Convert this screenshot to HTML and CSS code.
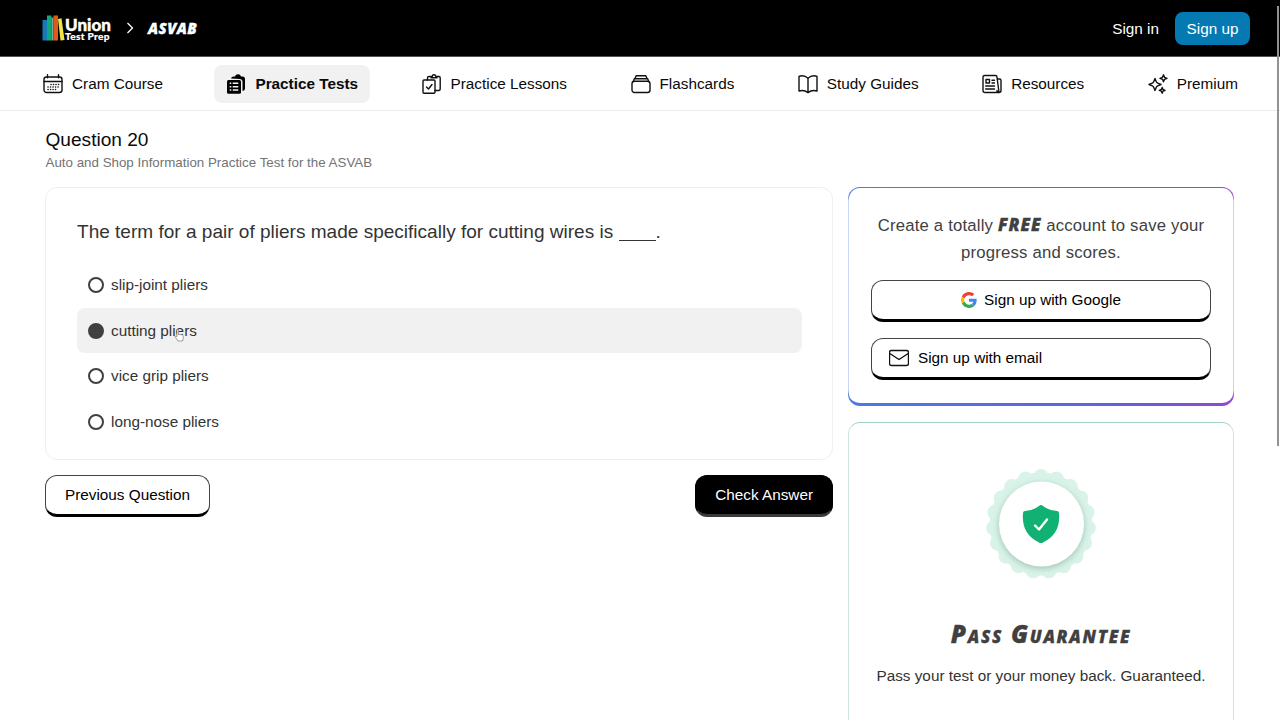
FILE: index.html
```html
<!DOCTYPE html>
<html lang="en">
<head>
    <meta charset="UTF-8">
    <meta name="viewport" content="width=device-width, initial-scale=1.0">
    <title>Question 20 - ASVAB Practice Test</title>
    <link rel="stylesheet" href="styles.css">
</head>
<body>

<header class="top-bar">
    <a class="logo">
        <svg class="logo-books" width="24" height="28" viewBox="0 0 24 28">
            <path fill="#1679b5" d="M0.5 6h5v20.500h-5z"/>
            <path fill="#13a878" d="M5 1.500h4.500v25H5z"/>
            <path fill="#76a9a0" d="M9.500 3.500h2v23h-2z"/>
            <path fill="#dd5b16" d="M11.500 1.500h4.500v25h-4.500z"/>
            <path fill="#f0e342" d="M16 5l3.500-.8 3 21.800-4 .5z"/>
        </svg>
        <span class="logo-text"><b>Union</b><small>Test Prep</small></span>
    </a>
    <svg class="chevron" width="8" height="12" viewBox="0 0 8 12"><path d="M1.500 1l5 5-5 5"/></svg>
    <span class="marker exam">ASVAB</span>
    <div class="account">
        <a class="sign-in">Sign in</a>
        <a class="sign-up">Sign up</a>
    </div>
</header>

<nav class="main-nav">
    <a class="nav-item">
        <svg class="icon" viewBox="0 0 20 20">
            <rect x="1" y="3" width="18" height="15.500" rx="2.500"/>
            <path d="M1 7.500h18M4.500 .8v3M15.500 .8v3"/>
            <path class="dots" d="M8 10.500h8M5 13h10.500M5 15.500h8"/>
        </svg>
        <span>Cram Course</span>
    </a>
    <a class="nav-item active">
        <svg class="icon" viewBox="0 0 20 20">
            <path class="solid" d="M5 4.500Q5.500 2.500 7.500 2.500H9Q9.500 .3 12 .3t3 2.200h1.500q2.500 0 2.500 2.500v9.500q0 2-2.500 2.500V8q0-3-3-3z"/>
            <rect class="solid" x="1" y="6" width="14" height="13.700" rx="1.500"/>
            <path class="knock" d="M3.700 9.300h1.600M6.700 9.300h5.600M3.700 12.700h1.600M6.700 12.700h5.600M3.700 16h1.600M6.700 16h5.600"/>
        </svg>
        <span>Practice Tests</span>
    </a>
    <a class="nav-item">
        <svg class="icon" viewBox="0 0 20 20">
            <rect x="1" y="6" width="12" height="13.200" rx="1"/>
            <path d="M5.500 6V4q0-1.500 1.500-1.500h2M14.500 2.500H17q1.200 0 1.200 1.500v11q0 1.500-1.500 1.500H13M9 3.800V2.500h1.200q.2-1.700 1.800-1.700t1.800 1.700H15v1.300zM4.500 13l2 2 3.500-4.500"/>
        </svg>
        <span>Practice Lessons</span>
    </a>
    <a class="nav-item">
        <svg class="icon" viewBox="0 0 20 20">
            <rect x="1" y="7.200" width="18" height="11.300" rx="2.500"/>
            <path d="M2.300 7.500l1-2.800h13.400l1 2.800M4 4.500l1.200-2.700h9.600L16 4.500"/>
        </svg>
        <span>Flashcards</span>
    </a>
    <a class="nav-item">
        <svg class="icon" viewBox="0 0 20 20">
            <path d="M10 4.200Q7.500 1.700 4 1.700q-1.600 0-3 .6v14.700q5-1.600 9 1.600 4-3.200 9-1.600V2.300q-1.400-.6-3-.6-3.500 0-6 2.500zM10 4.200v14.400"/>
        </svg>
        <span>Study Guides</span>
    </a>
    <a class="nav-item">
        <svg class="icon" viewBox="0 0 20 20">
            <path d="M17 18.500H3q-2 0-2-2V3Q1 1.500 2.500 1.500h11Q15 1.500 15 3zM15 5h2.500Q19 5 19 6.500v10q0 2-2 2t-2-2M10 6.200h2.500M10 9h2.500M3.700 12h8.800M3.700 15h8.800"/>
            <rect x="4" y="5.500" width="3.500" height="3.500"/>
        </svg>
        <span>Resources</span>
    </a>
    <a class="nav-item">
        <svg class="icon" viewBox="0 0 20 20">
            <path d="M7 4.500l1.300 3.200q.4 1 1.400 1.400L13 10.500l-3.300 1.300q-1 .4-1.400 1.400L7 16.500l-1.300-3.300q-.4-1-1.400-1.400L1 10.500l3.300-1.400q1-.4 1.400-1.400zM15.500 .8l1 2.500 2.500 1-2.500 1-1 2.500-1-2.500-2.500-1 2.500-1zM14.200 13.500l.8 2 2 .9-2 .8-.8 2-.9-2-2-.8 2-.9z"/>
        </svg>
        <span>Premium</span>
    </a>
</nav>

<div class="page">
    <h1 class="question-title">Question 20</h1>
    <p class="test-name">Auto and Shop Information Practice Test for the ASVAB</p>

    <div class="columns">
        <main class="quiz">
            <section class="question-card">
                <h2 class="question">The term for a pair of pliers made specifically for cutting wires is <span class="blank"></span>.</h2>
                <ul class="answers">
                    <li class="answer"><i class="radio"></i>slip-joint pliers</li>
                    <li class="answer selected"><i class="radio"></i>cutting pliers
                        <svg class="cursor" width="10" height="13" viewBox="0 0 10 13"><path d="M3 7.500V1.500q0-1 .8-1t.8 1v4q2.500-.2 4 .6.8.4.8 1.400-.2 2-.8 4.500H4Q2.500 9.500 1 7.800q0-1.200 2-.3z"/></svg>
                    </li>
                    <li class="answer"><i class="radio"></i>vice grip pliers</li>
                    <li class="answer"><i class="radio"></i>long-nose pliers</li>
                </ul>
            </section>
            <div class="actions">
                <button class="btn">Previous Question</button>
                <button class="btn btn-dark">Check Answer</button>
            </div>
        </main>

        <aside class="sidebar">
            <section class="signup-card">
                <p class="signup-text">Create a totally <span class="marker free">FREE</span> account to save your progress and scores.</p>
                <button class="btn btn-google">
                    <svg width="16" height="16" viewBox="0 0 48 48">
                        <path fill="#ea4335" d="M24 9.500c3.540 0 6.710 1.220 9.210 3.600l6.850-6.850C35.900 2.380 30.470 0 24 0 14.620 0 6.510 5.380 2.560 13.220l7.980 6.190C12.430 13.720 17.740 9.500 24 9.500z"/>
                        <path fill="#4285f4" d="M46.980 24.550c0-1.570-.15-3.090-.38-4.550H24v9.020h12.940c-.58 2.960-2.260 5.480-4.780 7.180l7.730 6c4.510-4.180 7.090-10.360 7.090-17.650z"/>
                        <path fill="#fbbc05" d="M10.530 28.590A14.500 14.500 0 0 1 9.770 24c0-1.600.27-3.140.76-4.590l-7.980-6.190A23.900 23.900 0 0 0 0 24c0 3.880.92 7.540 2.560 10.780z"/>
                        <path fill="#34a853" d="M24 48c6.480 0 11.930-2.130 15.890-5.810l-7.730-6c-2.150 1.450-4.920 2.300-8.160 2.300-6.260 0-11.570-4.220-13.470-9.910l-7.980 6.190C6.510 42.620 14.620 48 24 48z"/>
                    </svg>
                    Sign up with Google
                </button>
                <button class="btn btn-email">
                    <svg class="icon" viewBox="0 0 20 20"><rect x=".5" y="2.500" width="19" height="15" rx="2"/><path d="M.8 5.500l9.200 6 9.200-6"/></svg>
                    Sign up with email
                </button>
            </section>

            <section class="guarantee-card">
                <svg class="badge" width="120" height="120" viewBox="0 0 120 120">
                    <circle class="seal" cx="60" cy="60" r="51.500"/>
                    <circle class="scallops" cx="60" cy="60" r="47.500" pathLength="19" transform="rotate(-90 60 60)"/>
                    <circle class="disc" cx="60.500" cy="60" r="42.500"/>
                    <path class="shield" d="M60 41q1 0 2 1 5.500 4.500 14 5 1.800 0 2 2 2 21-16 29.500-2 1-4 0Q40 70 42 49q.2-2 2-2 8.500-.5 14-5 1-1 2-1z"/>
                    <path class="check" d="M54 61.500l4 4 8-10"/>
                </svg>
                <h3 class="marker guarantee-title">Pass Guarantee</h3>
                <p class="guarantee-text">Pass your test or your money back. Guaranteed.</p>
            </section>
        </aside>
    </div>
</div>

<div class="scroll-thumb"></div>

</body>
</html>
```
FILE: styles.css
```css
* {
    box-sizing: border-box;
}

body {
    margin: 0;
    height: 720px;
    overflow: hidden;
    background: #fff;
    color: #0a0a0a;
    font-family: "Liberation Sans", Arial, sans-serif;
    font-size: 15.3px;
}

.marker {
    font-family: "Permanent Marker", "Open Sans", sans-serif;
    font-weight: 800;
    font-style: italic;
    -webkit-text-stroke: 0.3px currentColor;
}

/* Top bar */
.top-bar {
    display: flex;
    align-items: center;
    height: 57px;
    padding: 0 30px 0 42px;
    background: #000;
    border-bottom: 1px solid #55535a;
    color: #fff;
}

.logo {
    display: flex;
    align-items: center;
    width: 69px;
}

.logo-books {
    flex: none;
    margin-right: -1px;
}

.logo-text {
    font-family: Lato, sans-serif;
    font-weight: 900;
    padding-top: 3px;
}

.logo-text b {
    display: block;
    font-weight: 900;
    font-size: 17px;
    line-height: 13px;
    -webkit-text-stroke: 0.4px #fff;
}

.logo-text small {
    display: block;
    font-size: 10px;
    line-height: 10px;
    letter-spacing: 0.350px;
    white-space: nowrap;
    -webkit-text-stroke: 0.2px #fff;
}

.chevron {
    margin: 0 14px 0 15px;
    fill: none;
    stroke: #fff;
    stroke-width: 1.300;
}

.exam {
    font-size: 15px;
    letter-spacing: 0.400px;
}

.account {
    display: flex;
    align-items: center;
    gap: 16px;
    margin-left: auto;
}

.sign-in {
    padding-top: 1px;
}

.sign-up {
    width: 75px;
    height: 33px;
    line-height: 34px;
    border-radius: 8px;
    background: #0579b2;
    text-align: center;
}

/* Navigation */
.main-nav {
    display: flex;
    justify-content: space-between;
    align-items: center;
    height: 54px;
    padding: 0 30px 0 31px;
    border-bottom: 1px solid #ebebeb;
}

.nav-item {
    display: flex;
    align-items: center;
    gap: 9px;
    height: 38px;
    padding: 0 12px 0 13px;
    border-radius: 8px;
    white-space: nowrap;
}

.nav-item.active {
    background: #f1f1f1;
    font-weight: bold;
}

.icon {
    flex: none;
    width: 20px;
    height: 20px;
    fill: none;
    stroke: #111;
    stroke-width: 1.400;
    stroke-linecap: round;
    stroke-linejoin: round;
}

.main-nav .icon {
    width: 20px;
    margin-left: -1px;
}

.icon .dots {
    stroke-dasharray: 0.100 2.400;
    stroke-width: 1.500;
}

.icon .solid {
    fill: #000;
    stroke: none;
}

.icon .knock {
    stroke: #f1f1f1;
    stroke-linecap: butt;
}

/* Page */
.page {
    padding: 17px 46px 0 45px;
}

.question-title {
    margin: 0;
    padding-left: 0.500px;
    font-size: 19.100px;
    font-weight: normal;
    line-height: 24px;
}

.test-name {
    margin: 0 0 15px;
    padding-left: 0.500px;
    color: #737373;
    font-size: 13.350px;
    line-height: 21px;
    height: 20px;
}

.columns {
    display: flex;
    gap: 15px;
}

.quiz {
    width: 788px;
}

.question-card {
    height: 273px;
    padding: 30px 30px 0 31px;
    border: 1px solid #efefef;
    border-radius: 12px;
    color: #333;
}

.question {
    margin: 0 0 16px;
    font-size: 19.050px;
    font-weight: normal;
    line-height: 28px;
    white-space: nowrap;
}

.blank {
    display: inline-block;
    width: 37px;
    height: 12px;
    border-bottom: 1px solid #333;
    vertical-align: -3px;
}

.answers {
    margin: 0;
    padding: 0;
    list-style: none;
}

.answer {
    position: relative;
    display: flex;
    align-items: center;
    height: 45.700px;
    padding-left: 11px;
    border-radius: 8px;
}

.answer.selected {
    background: #f1f1f1;
}

.radio {
    width: 16px;
    height: 16px;
    margin-right: 7px;
    border: 2px solid #404040;
    border-radius: 50%;
    background: #fff;
}

.selected .radio {
    background: #404040;
}

.cursor {
    position: absolute;
    left: 97px;
    top: 21px;
    fill: #fff;
    stroke: #777;
    stroke-width: 0.700;
}

.actions {
    display: flex;
    justify-content: space-between;
    margin-top: 15px;
}

.btn {
    height: 42px;
    padding: 0 19px;
    border: 1px solid #444;
    border-bottom: 3px solid #000;
    border-radius: 12px;
    background: #fff;
    color: #000;
    font: inherit;
    white-space: nowrap;
}

.btn-dark {
    background: #000;
    border-color: #000;
    border-bottom-color: #3a3a3a;
    color: #fff;
}

/* Sidebar */
.sidebar {
    width: 386px;
}

.signup-card {
    height: 219px;
    padding: 24px 22px 0;
    border: 1px solid transparent;
    border-bottom-width: 3px;
    border-radius: 12px;
    background:
        linear-gradient(#fff, #fff) padding-box,
        linear-gradient(transparent 8px, rgba(255, 255, 255, 0.7) 14px, rgba(255, 255, 255, 0.7) calc(100% - 16px), transparent calc(100% - 10px)) border-box,
        linear-gradient(90deg, #4a7ae0, #6560dc 70%, #9348d0) border-box;
}

.signup-text {
    margin: 0 0 14px;
    color: #404040;
    font-size: 16.700px;
    letter-spacing: 0.200px;
    line-height: 27px;
    text-align: center;
}

.free {
    display: inline-block;
    font-size: 17px;
    line-height: 20px;
    letter-spacing: 0.900px;
}

.signup-card .btn {
    display: flex;
    align-items: center;
    width: 340px;
    height: 42px;
}

.signup-card .btn-google {
    justify-content: center;
    gap: 7px;
    margin-bottom: 16px;
}

.signup-card .btn-email {
    gap: 9px;
    padding: 0 17px;
}

.guarantee-card {
    height: 330px;
    margin-top: 16px;
    padding-top: 41px;
    border: 1px solid #cfe6df;
    border-top-color: #a5d0c5;
    border-radius: 12px;
    text-align: center;
    color: #333;
}

.badge {
    display: block;
    margin: 0 auto;
}

.seal {
    fill: #d9f3e8;
}

.scallops {
    fill: none;
    stroke: #d9f3e8;
    stroke-width: 15;
    stroke-linecap: round;
    stroke-dasharray: 0 1;
}

.disc {
    fill: #fff;
    filter: drop-shadow(0 2px 3px rgba(0, 60, 40, 0.250));
}

.shield {
    fill: #10b172;
}

.check {
    fill: none;
    stroke: #fff;
    stroke-width: 2.400;
    stroke-linecap: round;
    stroke-linejoin: round;
}

.guarantee-title {
    margin: 36px 0 17px;
    font-size: 24.500px;
    font-variant: small-caps;
    letter-spacing: 1.700px;
    line-height: 27px;
    color: #404040;
}

.guarantee-text {
    margin: 0;
    line-height: 24px;
}

.scroll-thumb {
    position: absolute;
    top: 6px;
    right: 1px;
    width: 2px;
    height: 440px;
    background: #929292;
}
```
